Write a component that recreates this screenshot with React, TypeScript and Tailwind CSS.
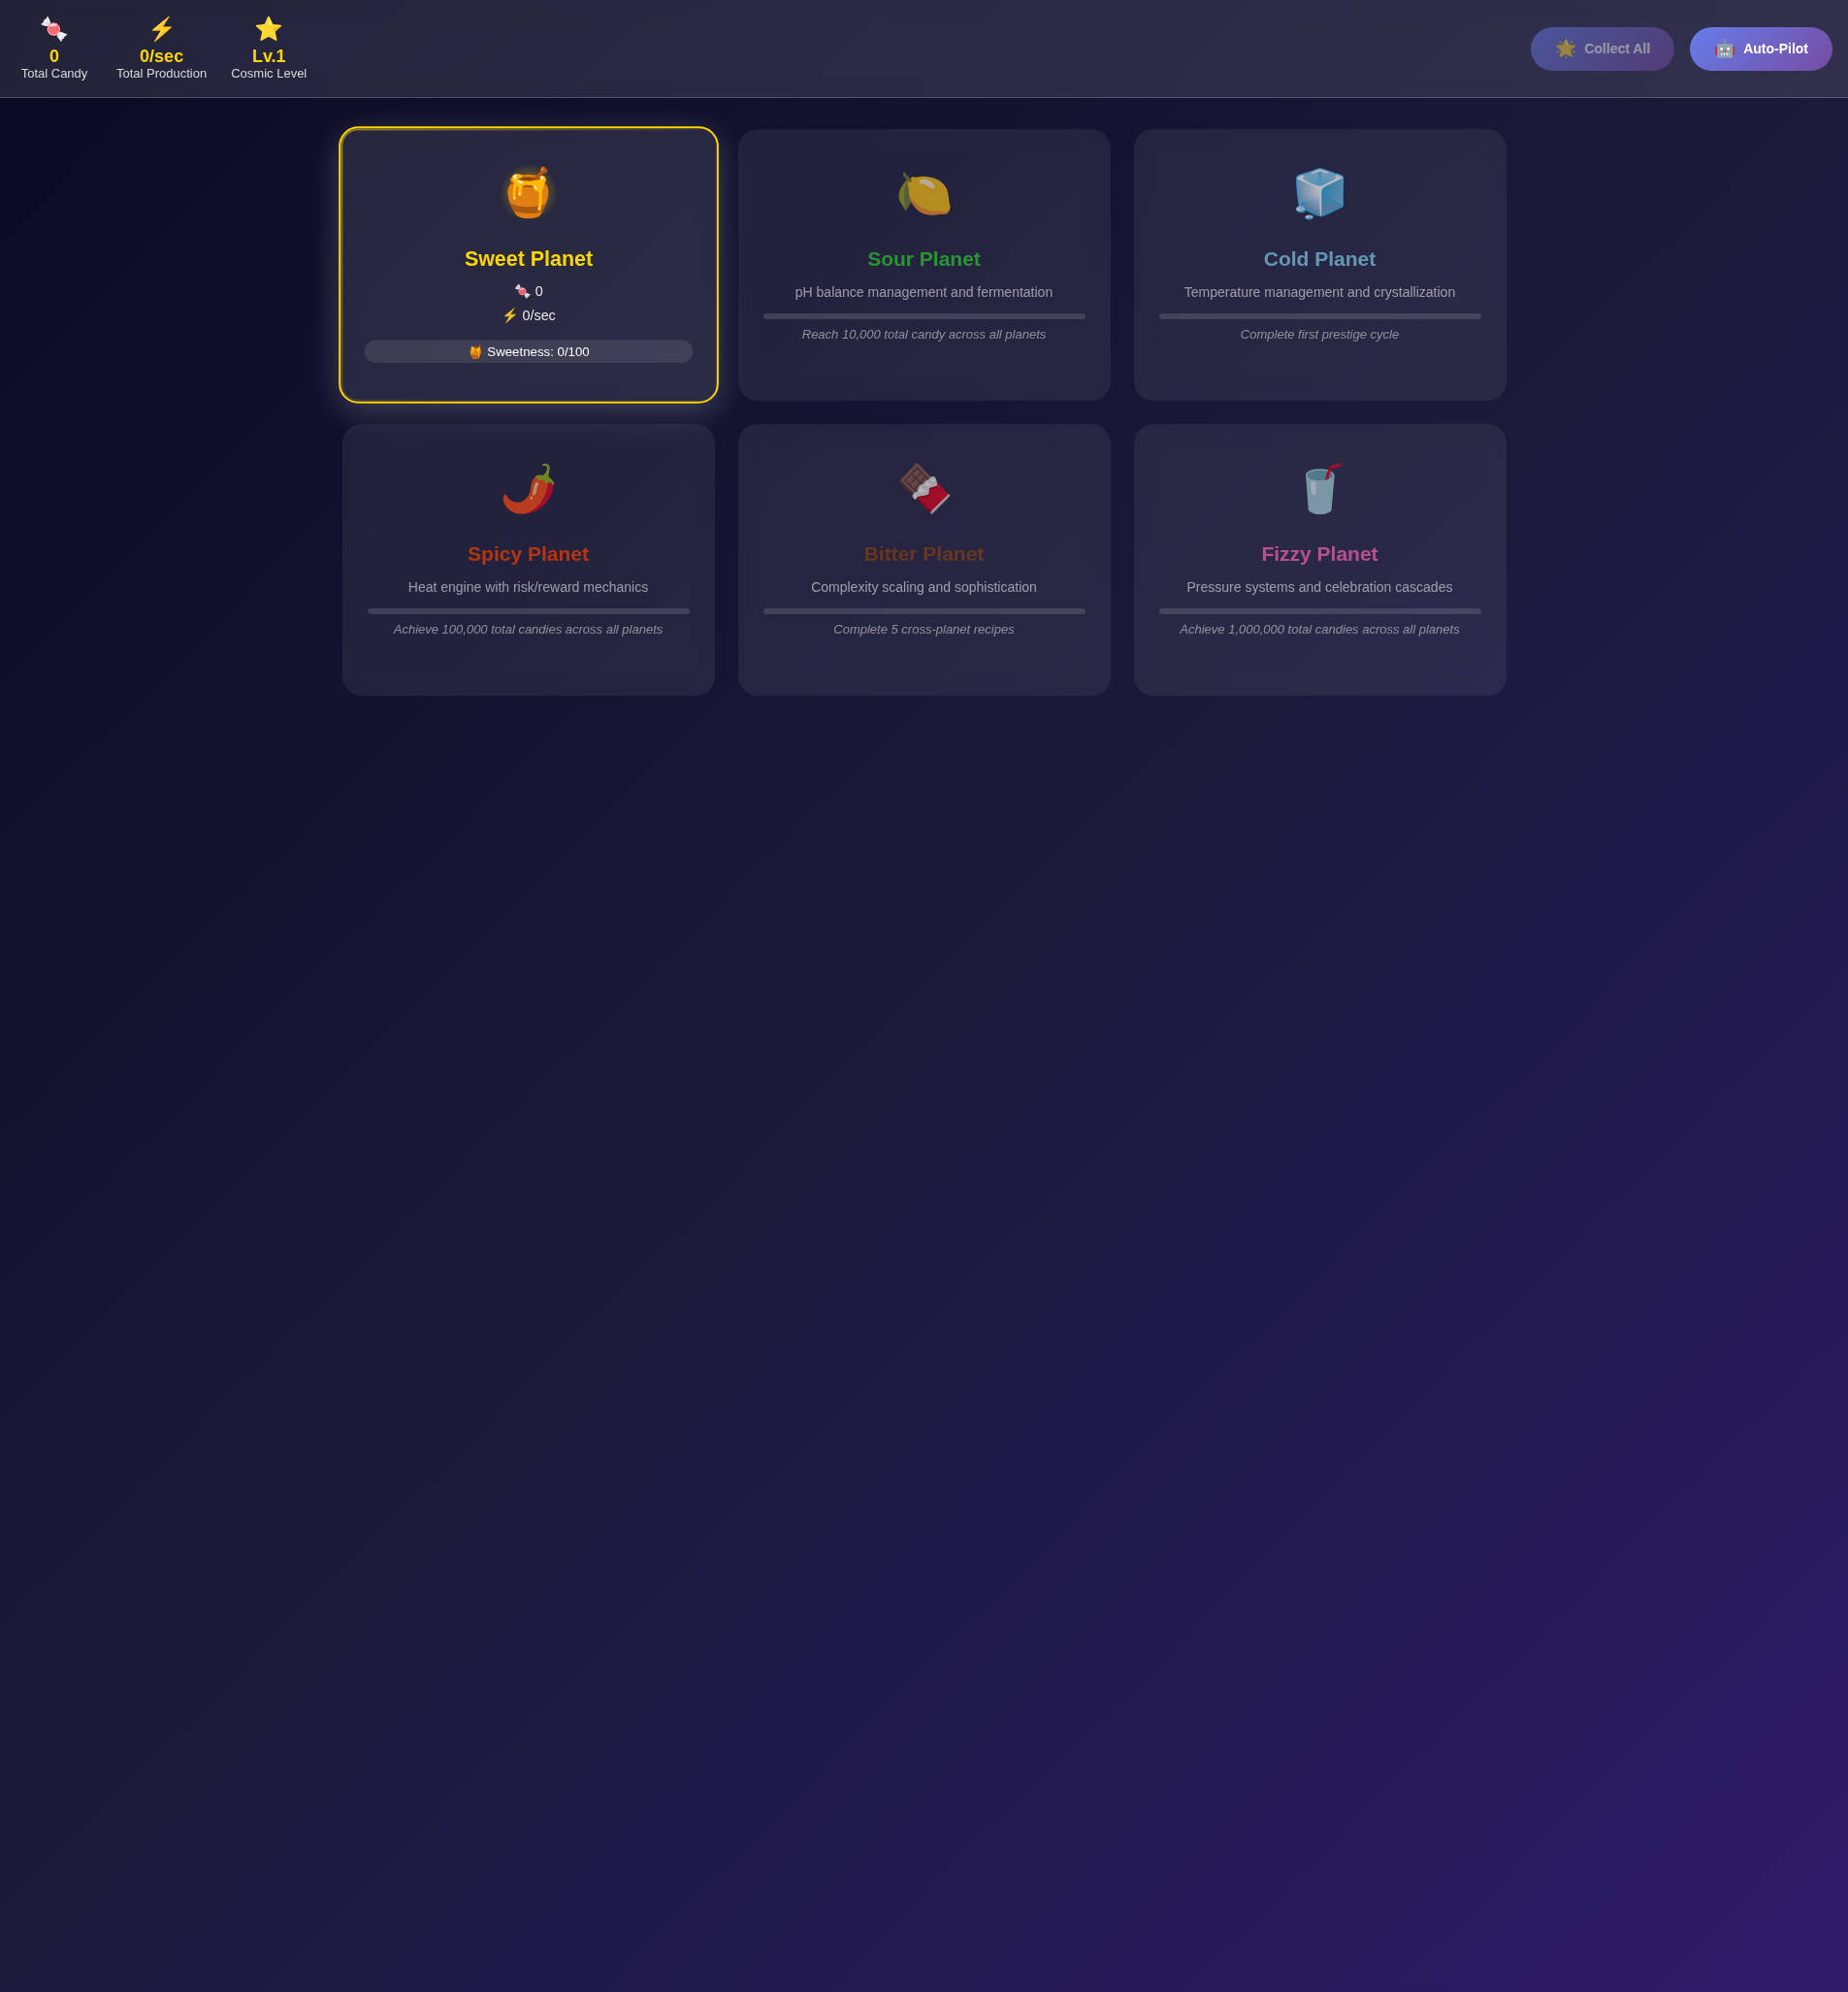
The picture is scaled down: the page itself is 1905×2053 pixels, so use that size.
const font = 'font-["Liberation_Sans",Arial,sans-serif]';

const stats = [
  { icon: "🍬", value: "0", label: "Total Candy" },
  { icon: "⚡", value: "0/sec", label: "Total Production" },
  { icon: "⭐", value: "Lv.1", label: "Cosmic Level" },
];

const locked = [
  { icon: "🍋", name: "Sour Planet", color: "text-[#32cd32]", text: "pH balance management and fermentation", goal: "Reach 10,000 total candy across all planets" },
  { icon: "🧊", name: "Cold Planet", color: "text-[#87ceeb]", text: "Temperature management and crystallization", goal: "Complete first prestige cycle" },
  { icon: "🌶️", name: "Spicy Planet", color: "text-[#ff4500]", text: "Heat engine with risk/reward mechanics", goal: "Achieve 100,000 total candies across all planets" },
  { icon: "🍫", name: "Bitter Planet", color: "text-[#8b4513]", text: "Complexity scaling and sophistication", goal: "Complete 5 cross-planet recipes" },
  { icon: "🥤", name: "Fizzy Planet", color: "text-[#ff69b4]", text: "Pressure systems and celebration cascades", goal: "Achieve 1,000,000 total candies across all planets" },
];

function Stat({ icon, value, label }: (typeof stats)[number]) {
  return (
    <div className="flex min-w-20 flex-col items-center">
      <span className="text-2xl leading-7">{icon}</span>
      <span className="mt-1 text-lg leading-5 font-bold text-[#ffd700]">{value}</span>
      <span className="text-[13px] leading-4 text-white/80">{label}</span>
    </div>
  );
}

function PilotButton({ icon, label, disabled }: { icon: string; label: string; disabled?: boolean }) {
  return (
    <button
      type="button"
      disabled={disabled}
      className="flex items-center gap-2 rounded-full bg-linear-[135deg] from-[#667eea] to-[#764ba2] px-[25px] py-3 text-sm font-bold text-white disabled:opacity-50"
    >
      <span className="text-lg leading-[21px]">{icon}</span>
      <span>{label}</span>
    </button>
  );
}

function SweetPlanet() {
  return (
    <article className="relative flex min-h-70 scale-102 flex-col items-center rounded-[20px] border-2 border-[#ffd700] bg-white/10 p-6 text-center shadow-[0_8px_32px_rgba(255,255,255,0.2)] backdrop-blur-[10px]">
      <span
        aria-hidden
        className="absolute inset-0 rounded-[18px] bg-[linear-gradient(135deg,rgba(255,215,0,0.5),transparent_60%)] p-0.5 [mask:linear-gradient(#000_0_0)_content-box_exclude,linear-gradient(#000_0_0)]"
      />
      <span className="w-20 bg-[radial-gradient(circle,rgba(255,215,0,0.6)_0%,transparent_51%)] text-5xl leading-[82px]">{"🍯"}</span>
      <h2 className="mt-3.5 text-[21px] leading-6 font-bold text-[#ffd700]">Sweet Planet</h2>
      <p className="mt-2 text-sm leading-[25px] opacity-90">🍬 0</p>
      <p className="text-sm leading-[25px] opacity-90">⚡ 0/sec</p>
      <p className="mt-3 w-full rounded-full bg-white/10 py-1 text-[13px] leading-[15px]">🍯 Sweetness: 0/100</p>
    </article>
  );
}

function LockedPlanet({ icon, name, color, text, goal }: (typeof locked)[number]) {
  return (
    <article className="flex min-h-70 flex-col items-center rounded-[20px] border-2 border-transparent bg-white/10 p-6 text-center opacity-70 backdrop-blur-[10px]">
      <span className="text-5xl leading-[82px]">{icon}</span>
      <h2 className={`mt-3.5 text-[21px] leading-6 font-bold ${color}`}>{name}</h2>
      <p className="mt-2.5 text-sm leading-6 text-white/80">{text}</p>
      <div role="progressbar" aria-label={`${name} unlock progress`} aria-valuenow={0} className="mt-2.5 h-1.5 w-full rounded-[3px] bg-white/20" />
      <p className="mt-2 text-[13px] leading-4 text-white/70 italic">{goal}</p>
    </article>
  );
}

export default function App() {
  return (
    <div className={`min-h-screen bg-linear-[135deg] from-[#0a0a23] via-[#1a1a3a] to-[#2d1b69] text-white ${font}`}>
      <header className="flex items-center justify-between border-b border-white/20 bg-white/10 p-4 backdrop-blur-[10px]">
        <div className="flex gap-6">
          {stats.map((s) => (
            <Stat key={s.label} {...s} />
          ))}
        </div>
        <div className="flex gap-4">
          <PilotButton icon="🌟" label="Collect All" disabled />
          <PilotButton icon="🤖" label="Auto-Pilot" />
        </div>
      </header>
      <main className="mx-auto grid max-w-[1264px] grid-cols-3 gap-6 p-8">
        <SweetPlanet />
        {locked.map((p) => (
          <LockedPlanet key={p.name} {...p} />
        ))}
      </main>
    </div>
  );
}
